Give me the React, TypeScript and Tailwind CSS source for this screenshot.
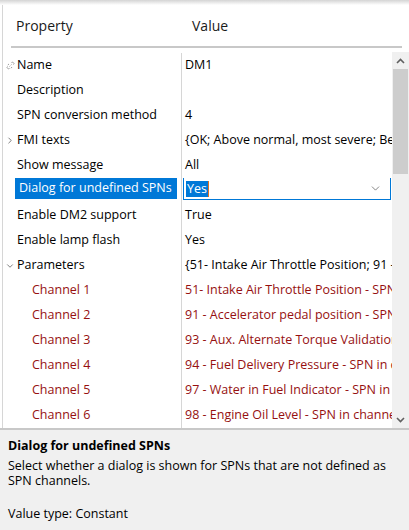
import { ChevronDown, ChevronRight } from "lucide-react";

type Row = {
  label: string;
  value: string;
  expander?: "open" | "closed" | "link";
  child?: boolean;
};

const rows: Row[] = [
  { label: "Name", value: "DM1", expander: "link" },
  { label: "Description", value: "" },
  { label: "SPN conversion method", value: "4" },
  { label: "FMI texts", value: "{OK; Above normal, most severe; Below normal}", expander: "closed" },
  { label: "Show message", value: "All" },
  { label: "Dialog for undefined SPNs", value: "Yes" },
  { label: "Enable DM2 support", value: "True" },
  { label: "Enable lamp flash", value: "Yes" },
  { label: "Parameters", value: "{51- Intake Air Throttle Position; 91 - Accelerator}", expander: "open" },
  { label: "Channel 1", value: "51- Intake Air Throttle Position - SPN in channel", child: true },
  { label: "Channel 2", value: "91 - Accelerator pedal position - SPN in channel", child: true },
  { label: "Channel 3", value: "93 - Aux. Alternate Torque Validation - SPN", child: true },
  { label: "Channel 4", value: "94 - Fuel Delivery Pressure - SPN in channel", child: true },
  { label: "Channel 5", value: "97 - Water in Fuel Indicator - SPN in channel", child: true },
  { label: "Channel 6", value: "98 - Engine Oil Level - SPN in channel", child: true },
];

function LinkIcon() {
  return (
    <svg width="9" height="9" viewBox="0 0 9 9" fill="none" stroke="#9a9a9a" strokeWidth="1">
      <path d="M1.5 5.5 L1 6.5 L2.5 8 L3.5 7.5" />
      <path d="M5.5 1.5 L6.5 1 L8 2.5 L7.5 3.5" />
      <path d="M3 3 L1.8 4" />
      <path d="M6 6 L5 7.2" />
      <path d="M3.5 5.5 L5.5 3.5" strokeDasharray="1 1" />
    </svg>
  );
}

export default function App() {
  return (
    <div className="w-[409px] h-[530px] flex flex-col bg-white text-black text-[12.5px] font-['Segoe_UI','Open_Sans',sans-serif] overflow-hidden">
      {/* top shadow strip */}
      <div className="h-[5px] bg-gradient-to-b from-[#d4d4d4] to-white" />

      <div className="flex-1 flex flex-col ml-[2px] border-l border-[#d6d6d6] min-h-0">
        {/* header */}
        <div className="h-[41px] flex items-center text-[14px] text-[#1a1a1a]">
          <span className="w-[189px] pl-[13px]">Property</span>
          <span>Value</span>
        </div>
        <div className="h-[2px] bg-[#c8c8c8] ml-[8px] mr-[7px]" />
        <div className="h-[4px]" />

        {/* grid body */}
        <div className="flex h-[376px]">
          <div className="flex-1 min-w-0 pt-[1px]">
            {rows.map((r) => {
              const selected = r.label === "Dialog for undefined SPNs";
              const red = r.child ? "text-[#961010]" : "";
              return (
                <div key={r.label} className="h-[25px] flex">
                  <div className="w-[179px] shrink-0 border-r border-[#d6d6d6] flex items-center">
                    <span className="w-[12px] flex justify-center items-center pl-[2px]">
                      {r.expander === "link" && <LinkIcon />}
                      {r.expander === "closed" && (
                        <ChevronRight size={11} strokeWidth={1.5} className="text-[#333]" />
                      )}
                      {r.expander === "open" && (
                        <ChevronDown size={12} strokeWidth={1.5} className="text-[#333]" />
                      )}
                    </span>
                    {selected ? (
                      <span className="self-start h-[21px] w-[162px] flex items-center bg-[#0078d7] text-white pl-[4px] whitespace-nowrap">
                        {r.label}
                      </span>
                    ) : (
                      <span className={`whitespace-nowrap ${r.child ? "pl-[17px]" : "pl-[2px]"} ${red}`}>
                        {r.label}
                      </span>
                    )}
                  </div>
                  <div className="flex-1 min-w-0 flex items-center overflow-hidden">
                    {selected ? (
                      <div className="self-start h-[23px] -mt-[1px] ml-[1px] mr-[1px] flex-1 border border-[#0078d7] flex items-center pl-[2px] pr-[8px]">
                        <span className="bg-[#0078d7] text-white px-[1px] border-r border-[#e07020] leading-[16px]">Yes</span>
                        <span className="flex-1" />
                        <ChevronDown size={13} strokeWidth={1.3} className="text-[#555]" />
                      </div>
                    ) : (
                      <span className={`pl-[3px] whitespace-nowrap ${red}`}>{r.value}</span>
                    )}
                  </div>
                </div>
              );
            })}
          </div>

          {/* scrollbar */}
          <div className="w-[17px] shrink-0 bg-[#f0f0f0] flex flex-col items-center">
            <div className="h-[17px] flex items-center justify-center text-[#606060]">
              <svg width="9" height="6" viewBox="0 0 9 6" fill="none" stroke="currentColor" strokeWidth="1.6">
                <path d="M1 5 L4.5 1.5 L8 5" />
              </svg>
            </div>
            <div className="w-[15px] h-[105px] bg-[#cdcdcd]" />
            <div className="flex-1" />
            <div className="h-[17px] flex items-center justify-center text-[#606060]">
              <svg width="9" height="6" viewBox="0 0 9 6" fill="none" stroke="currentColor" strokeWidth="1.6">
                <path d="M1 1 L4.5 4.5 L8 1" />
              </svg>
            </div>
          </div>
        </div>
      </div>

      {/* description panel */}
      <div className="h-[2px] bg-[#c8c8c8]" />
      <div className="h-[100px] bg-[#f0f0f0] px-[8px] pt-[8px] leading-[15px]">
        <div className="font-bold">Dialog for undefined SPNs</div>
        <div className="mt-[5px]">Select whether a dialog is shown for SPNs that are not defined as SPN channels.</div>
        <div className="mt-[18px]">Value type: Constant</div>
      </div>
    </div>
  );
}
